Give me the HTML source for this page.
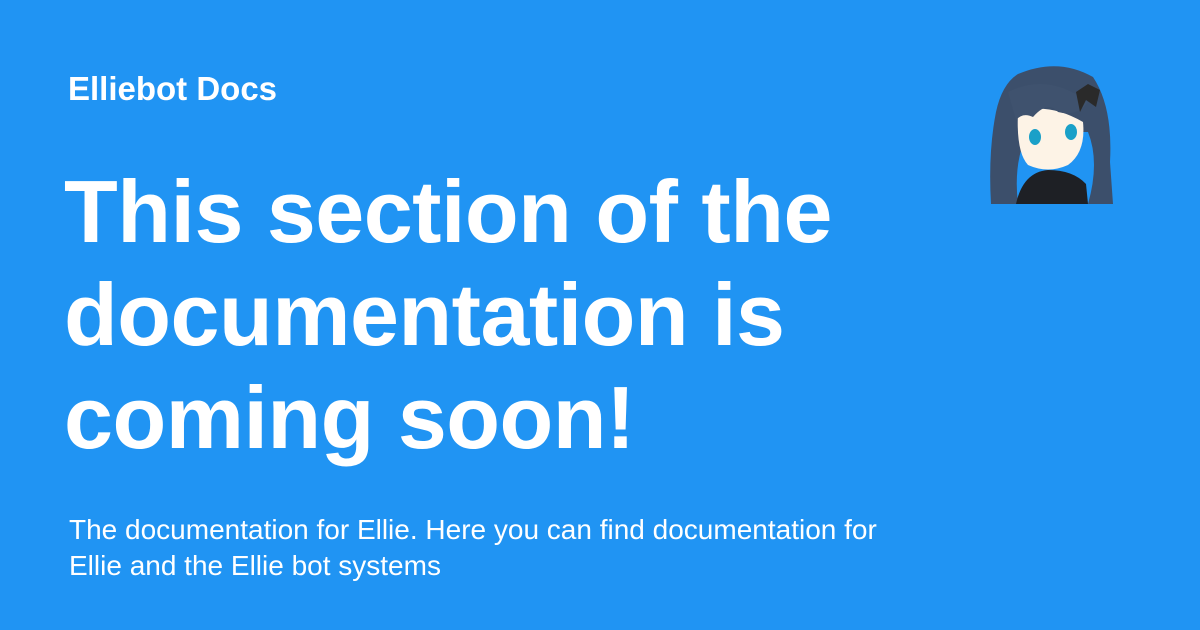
<!DOCTYPE html>
<html><head><style>
html,body{margin:0;padding:0}
body{width:1200px;height:630px;background:#2094f3;position:relative;overflow:hidden;font-family:"Liberation Sans",sans-serif;color:#fff}
.site{position:absolute;left:68px;top:70px;font-size:33px;font-weight:bold}
.title{position:absolute;left:64px;top:160px;font-size:88px;font-weight:bold;line-height:103px;letter-spacing:-0.5px}
.desc{position:absolute;left:69px;top:512px;font-size:28px;line-height:36px}
svg{position:absolute;left:988px;top:62px}
</style></head><body>
<div class="site">Elliebot Docs</div>
<div class="title">This section of the<br>documentation is<br>coming soon!</div>
<div class="desc">The documentation for Ellie. Here you can find documentation for<br>Ellie and the Ellie bot systems</div>
<svg width="130" height="142" viewBox="0 0 130 142">
<path d="M30 12 Q70 -5 105 15 Q125 45 122 100 L125 142 L100 142 Q112 100 100 70 L40 70 Q25 100 30 142 L3 142 Q0 90 8 50 Q14 22 30 12Z" fill="#3c4f6b"/>
<path d="M30 50 Q60 40 95 60 Q98 90 80 103 Q60 112 40 103 Q28 90 30 50Z" fill="#fdf3e6"/>
<path d="M20 30 Q60 10 100 40 Q90 55 70 50 Q60 38 45 55 Q35 50 28 58 Z" fill="#3f526e"/>
<ellipse cx="47" cy="75" rx="6" ry="8" fill="#1aa0c8"/>
<ellipse cx="83" cy="70" rx="6" ry="8" fill="#1aa0c8"/>
<path d="M28 142 Q35 110 60 108 Q85 108 98 122 L100 142Z" fill="#1e2025"/>
<path d="M88 30 L100 22 L112 28 L108 45 L98 38 L92 50 Z" fill="#2a2a2a"/>
</svg>
</body></html>
